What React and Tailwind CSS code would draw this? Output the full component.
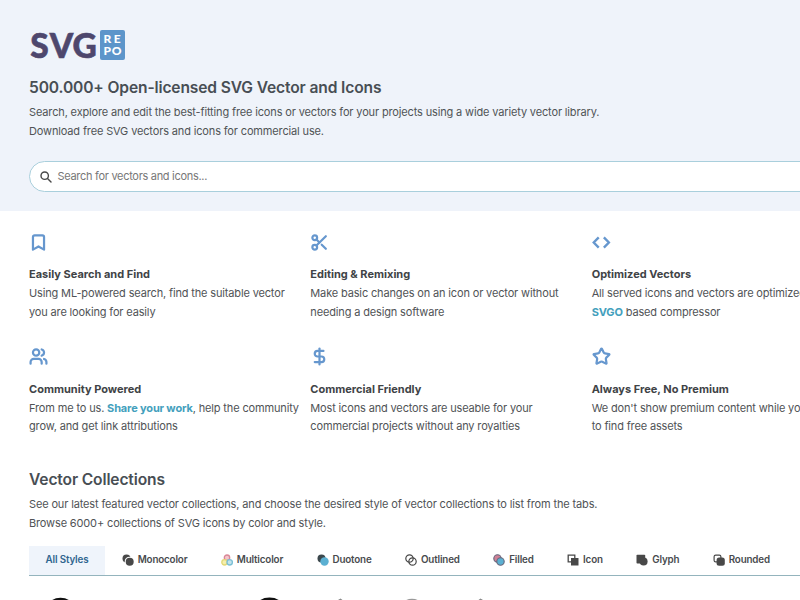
import React from "react";
import { Bookmark, Scissors, Users, DollarSign, Star } from "lucide-react";

const Angles = () => (
  <svg width="19" height="19" viewBox="0 0 24 24" fill="none" stroke="currentColor" strokeWidth="3">
    <path d="M8.500 5.500 2.200 12l6.300 6.500M15 5.500 21.300 12 15 18.500" />
  </svg>
);

const SearchIcon = () => (
  <svg width="12" height="12" viewBox="0 0 12 12" fill="none" stroke="#484848" strokeWidth="1.400" strokeLinecap="round">
    <circle cx="4.700" cy="4.700" r="3.700" />
    <path d="m7.500 7.500 3.500 3.500" />
  </svg>
);

const iconProps = { size: 19, strokeWidth: 2.8 };

const features = [
  {
    icon: <Bookmark {...iconProps} />,
    title: "Easily Search and Find",
    body: <>Using ML-powered search, find the suitable vector<br />you are looking for easily</>,
  },
  {
    icon: <Scissors {...iconProps} />,
    title: "Editing & Remixing",
    body: <>Make basic changes on an icon or vector without<br />needing a design software</>,
  },
  {
    icon: <Angles />,
    title: "Optimized Vectors",
    body: <>All served icons and vectors are optimized with<br /><Link>SVGO</Link> based compressor</>,
  },
  {
    icon: <Users {...iconProps} />,
    title: "Community Powered",
    body: <>From me to us. <Link>Share your work</Link>, help the community<br />grow, and get link attributions</>,
  },
  {
    icon: <DollarSign {...iconProps} />,
    title: "Commercial Friendly",
    body: <>Most icons and vectors are useable for your<br />commercial projects without any royalties</>,
  },
  {
    icon: <Star {...iconProps} />,
    title: "Always Free, No Premium",
    body: <>We don't show premium content while you try<br />to find free assets</>,
  },
];

function Link({ children }) {
  return <a className="font-bold text-[#449fbd]">{children}</a>;
}

const tabs = [
  { label: "Monocolor", art: <g fill="#484848"><circle cx="4.500" cy="4.500" r="4" /><circle cx="7.500" cy="7.500" r="4.800" fill="#fff" /><circle cx="7.700" cy="7.700" r="4" /></g> },
  {
    label: "Multicolor",
    art: (
      <g fill="none" strokeWidth="1.300">
        <circle cx="6" cy="3.700" r="2.700" stroke="#d98797" fill="#f4c4ca" />
        <circle cx="3.500" cy="8.300" r="2.700" stroke="#e3d978" fill="#f6efad" />
        <circle cx="8.700" cy="8.300" r="2.700" stroke="#7abfd5" fill="#c4e3ec" />
      </g>
    ),
  },
  { label: "Duotone", art: <g><circle cx="4.500" cy="4.500" r="4" fill="#3b474c" /><circle cx="7.500" cy="7.500" r="4.200" fill="#5bb0d2" /></g> },
  { label: "Outlined", art: <g fill="none" stroke="#484848" strokeWidth="1.200"><circle cx="4.500" cy="4.500" r="3.700" /><circle cx="7.500" cy="7.500" r="3.700" /></g> },
  { label: "Filled", art: <g stroke="#66677c" strokeWidth="1.100"><circle cx="4.500" cy="4.500" r="3.700" fill="#cf8196" /><circle cx="7.500" cy="7.500" r="3.700" fill="#5bb0d2" /></g> },
  { label: "Icon", art: <g><path d="M1.200 1.200h6.600v6.600H1.200z" fill="none" stroke="#484848" strokeWidth="1.300" /><path d="M4 4h7.500v7.500H4z" fill="#484848" /></g> },
  { label: "Glyph", art: <g fill="#484848"><rect x=".500" y=".800" width="8.700" height="8.700" rx=".8" /><circle cx="7.600" cy="7.600" r="4" /></g> },
  { label: "Rounded", art: <g><rect x="1.100" y="1.100" width="6.800" height="6.800" rx="1.600" fill="none" stroke="#484848" strokeWidth="1.200" /><rect x="3.600" y="3.600" width="8.200" height="8.200" rx="2.500" fill="#484848" /></g> },
];

function Logo() {
  return (
    <svg width="98" height="34" viewBox="0 0 98 34" fontFamily="Lato, sans-serif" className="overflow-visible">
      <text x="1.200 20.800 43.500" y="28.500" fontSize="33.500" fontWeight="900" fill="#4e476d" stroke="#4e476d" strokeWidth="0.600">SVG</text>
      <rect x="71" y="1" width="25" height="30" rx="2" fill="#5d95ca" />
      <g fill="#fff" fontSize="12" fontWeight="900">
        <text x="74.500 84.800" y="13.700">RE</text>
        <text x="74.500 82.800" y="26.300">PO</text>
      </g>
    </svg>
  );
}

export default function App() {
  return (
    <div className="h-[600px] w-[800px] overflow-hidden bg-white font-[Inter,sans-serif] text-[11px] text-[#505356]">
      <header className="h-[211px] bg-[#eff3fa] pl-[29px] pt-[29px]">
        <Logo />
        <h1 className="mt-[13px] text-[15.6px] leading-6 font-semibold tracking-[-0.14px] whitespace-nowrap text-[#484e54]">
          500.000+ Open-licensed SVG Vector and Icons
        </h1>
        <p className="mt-[3px] leading-[19px] tracking-[-0.145px] whitespace-nowrap">
          Search, explore and edit the best-fitting free icons or vectors for your projects using a wide variety vector library.
          <br />
          Download free SVG vectors and icons for commercial use.
        </p>
        <div className="mt-5 flex h-[31px] w-[790px] items-center rounded-full border-[1.5px] border-[#a9cfdc] bg-white pl-2.5">
          <SearchIcon />
          <span className="ml-[5.5px] tracking-[-0.3px] text-[#777]">Search for vectors and icons...</span>
        </div>
      </header>
      <section className="grid w-[873px] grid-cols-3 pl-[29px] pt-[21px]">
        {features.map((f) => (
          <article key={f.title} className="h-[114.6px] whitespace-nowrap">
            <div className="flex h-5 items-center text-[#6697ce]">{f.icon}</div>
            <h3 className="mt-[13px] leading-[19px] font-bold text-[#404346]">{f.title}</h3>
            <p className="leading-[18.8px] tracking-[-0.15px]">{f.body}</p>
          </article>
        ))}
      </section>
      <section className="pl-[29px] pt-[7px]">
        <h2 className="text-[15.6px] leading-6 font-semibold tracking-[-0.14px] text-[#484e54]">Vector Collections</h2>
        <p className="mt-[3px] leading-[19px] tracking-[-0.145px] whitespace-nowrap">
          See our latest featured vector collections, and choose the desired style of vector collections to list from the tabs.
          <br />
          Browse 6000+ collections of SVG icons by color and style.
        </p>
        <nav className="mt-[13px] flex h-[30px] w-[800px] border-b border-[#94b4bd] text-[9.8px] font-semibold tracking-[-0.15px] text-[#484b4e]">
          <div className="flex w-[76px] shrink-0 items-center justify-center bg-[#eff4fb] pb-px text-[#2f6690]">All Styles</div>
          {tabs.map((t) => (
            <div key={t.label} className="flex shrink-0 items-center gap-1 px-[16.700px] pb-px">
              <svg width="12" height="12" viewBox="0 0 12 12">{t.art}</svg>
              {t.label}
            </div>
          ))}
        </nav>
        <svg width="771" height="24" viewBox="29 576 771 24">
          <ellipse cx="60.500" cy="606" rx="12" ry="8.300" fill="#111" />
          <ellipse cx="269.500" cy="606" rx="13" ry="8.500" fill="#111" />
          <ellipse cx="412" cy="603" rx="8" ry="4.300" fill="#999" />
          <path d="M338 600l2.500-1.500 2 1.500M478.500 600l2-1.500 2.500 1.500" fill="#888" />
        </svg>
      </section>
    </div>
  );
}
